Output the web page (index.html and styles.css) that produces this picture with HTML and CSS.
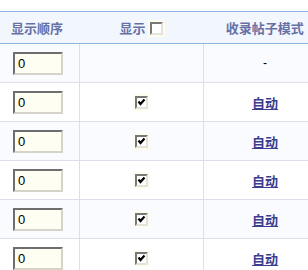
FILE: index.html
```html
<!DOCTYPE html>
<html lang="zh-CN">
<head>
  <meta charset="UTF-8">
  <title>论坛版块设置</title>
  <link rel="stylesheet" href="styles.css">
</head>
<body>

<table class="forum_list">
  <thead>
    <tr>
      <th class="col_order">显示顺序</th>
      <th class="col_show">显示<span class="cb"></span></th>
      <th class="col_mode">收录帖子模式</th>
    </tr>
  </thead>
  <tbody>
    <tr class="alt">
      <td><input type="text" class="order_input" value="0"></td>
      <td></td>
      <td>-</td>
    </tr>
    <tr>
      <td><input type="text" class="order_input" value="0"></td>
      <td><span class="cb"><svg viewBox="0 0 9 9" width="9" height="9"><path d="M1.5 3.5 L3.5 6 L7.5 1.5" stroke="#000" stroke-width="2.2" fill="none"/></svg></span></td>
      <td><a href="#" class="mode_link">自动</a></td>
    </tr>
    <tr class="alt">
      <td><input type="text" class="order_input" value="0"></td>
      <td><span class="cb"><svg viewBox="0 0 9 9" width="9" height="9"><path d="M1.5 3.5 L3.5 6 L7.5 1.5" stroke="#000" stroke-width="2.2" fill="none"/></svg></span></td>
      <td><a href="#" class="mode_link">自动</a></td>
    </tr>
    <tr>
      <td><input type="text" class="order_input" value="0"></td>
      <td><span class="cb"><svg viewBox="0 0 9 9" width="9" height="9"><path d="M1.5 3.5 L3.5 6 L7.5 1.5" stroke="#000" stroke-width="2.2" fill="none"/></svg></span></td>
      <td><a href="#" class="mode_link">自动</a></td>
    </tr>
    <tr class="alt">
      <td><input type="text" class="order_input" value="0"></td>
      <td><span class="cb"><svg viewBox="0 0 9 9" width="9" height="9"><path d="M1.5 3.5 L3.5 6 L7.5 1.5" stroke="#000" stroke-width="2.2" fill="none"/></svg></span></td>
      <td><a href="#" class="mode_link">自动</a></td>
    </tr>
    <tr>
      <td><input type="text" class="order_input" value="0"></td>
      <td><span class="cb"><svg viewBox="0 0 9 9" width="9" height="9"><path d="M1.5 3.5 L3.5 6 L7.5 1.5" stroke="#000" stroke-width="2.2" fill="none"/></svg></span></td>
      <td><a href="#" class="mode_link">自动</a></td>
    </tr>
  </tbody>
</table>

</body>
</html>
```

FILE: styles.css
```css
body {
  margin: 0;
  padding-top: 11px;
  font-family: "Liberation Sans", "Noto Sans CJK SC", sans-serif;
  font-size: 12px;
  background: #fff;
}
.forum_list {
  border-collapse: collapse;
  width: 308px;
  table-layout: fixed;
}
.forum_list th {
  height: 31px;
  padding: 0;
  background-color: #f2f7fd;
  border-top: 1px solid #8db7df;
  border-bottom: 1px solid #8db7df;
  color: #6670a6;
  font-size: 13px;
  font-weight: bold;
  font-family: "Noto Sans CJK SC", sans-serif;
}
.forum_list th.col_order {
  width: 68px;
  text-align: left;
  padding-left: 11px;
}
.forum_list th.col_show {
  width: 124px;
}
.forum_list th.col_mode {
  width: 86px;
  padding-left: 18px;
}
.forum_list td {
  height: 38px;
  padding: 0;
  text-align: center;
  vertical-align: middle;
  border-bottom: 1px solid #dcdee8;
  border-left: 1px solid #dcdee8;
}
.forum_list td:first-child {
  border-left: none;
  text-align: left;
  padding-left: 13px;
}
.forum_list td:last-child {
  padding-left: 18px;
}
.forum_list tr.alt td {
  background-color: #f9fbff;
}
.order_input {
  box-sizing: border-box;
  width: 50px;
  height: 23px;
  margin: 0;
  padding: 1px 3px;
  border: 2px solid;
  border-color: #6e6e6e #d6d3ca #d6d3ca #6e6e6e;
  background-color: #fefff2;
  font-family: "Liberation Sans", sans-serif;
  font-size: 13px;
  color: #000;
  display: block;
}
.cb {
  display: inline-block;
  box-sizing: border-box;
  width: 13px;
  height: 13px;
  border: 2px solid;
  border-color: #777 #e4e2da #e4e2da #777;
  background: #fff;
  vertical-align: middle;
  box-shadow: 0 0 0 2px #fcfdee;
}
.cb svg {
  display: block;
}
th .cb {
  vertical-align: -2px;
  margin-left: 5px;
}
.mode_link {
  color: #3d3d8d;
  font-weight: bold;
  font-size: 13px;
  font-family: "Noto Sans CJK SC", sans-serif;
  text-decoration: underline;
}
```
